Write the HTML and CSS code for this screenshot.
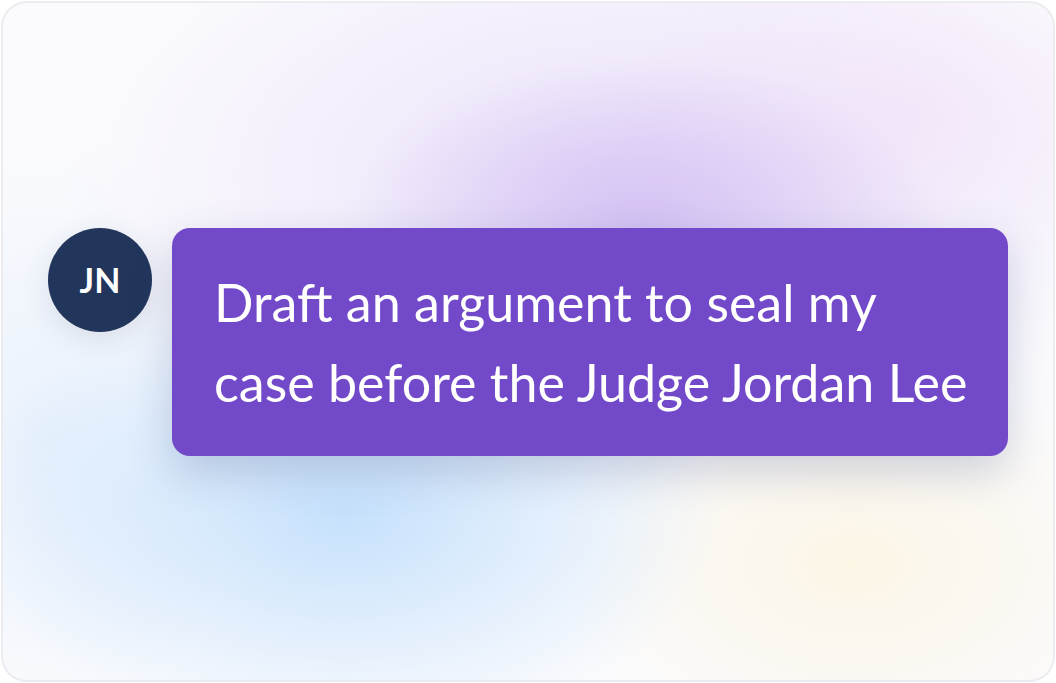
FILE: index.html
```html
<!DOCTYPE html>
<html lang="en">
<head>
<meta charset="utf-8">
<title>Chat</title>
<link rel="stylesheet" href="styles.css">
</head>
<body>
<div class="card">
  <div class="row">
    <div class="avatar">JN</div>
    <div class="bubble">Draft an argument to seal my<br>case before the Judge Jordan Lee</div>
  </div>
</div>
</body>
</html>
```

FILE: styles.css
```css
html, body {
  margin: 0;
  padding: 0;
  background: #ffffff;
}
body {
  width: 1056px;
  height: 683px;
  overflow: hidden;
}
.card {
  box-sizing: border-box;
  width: 1054px;
  height: 681px;
  margin: 1px;
  border: 2px solid #ececf0;
  border-radius: 26px;
  overflow: hidden;
  display: flex;
  flex-direction: column;
  justify-content: center;
  padding: 0 45px;
  background:
    radial-gradient(ellipse 300px 170px at 640px 225px, rgba(200, 178, 240, 0.7), rgba(200, 178, 240, 0) 100%),
    radial-gradient(ellipse 560px 300px at 620px 170px, rgba(226, 210, 248, 0.65), rgba(226, 210, 248, 0) 100%),
    radial-gradient(ellipse 300px 180px at 900px 110px, rgba(246, 230, 248, 0.6), rgba(246, 230, 248, 0) 100%),
    radial-gradient(ellipse 380px 230px at 340px 510px, rgba(188, 220, 252, 0.85), rgba(188, 220, 252, 0) 100%),
    radial-gradient(ellipse 300px 200px at 850px 560px, rgba(252, 243, 222, 0.75), rgba(252, 243, 222, 0) 100%),
    radial-gradient(ellipse 220px 300px at 40px 430px, rgba(226, 238, 252, 0.7), rgba(226, 238, 252, 0) 100%),
    #fbfbfd;
}
.row {
  display: flex;
  align-items: flex-start;
  gap: 20px;
}
.avatar {
  flex: 0 0 104px;
  width: 104px;
  height: 104px;
  border-radius: 50%;
  background: #22355a;
  color: #ffffff;
  font-family: Lato, "Noto Sans", sans-serif;
  font-weight: 700;
  font-size: 34px;
  display: flex;
  align-items: center;
  justify-content: center;
  box-shadow: 0 8px 30px rgba(40, 50, 90, 0.12);
}
.bubble {
  flex: 1;
  box-sizing: border-box;
  height: 228px;
  padding: 34px 40px 34px 42px;
  background: #7149c9;
  border-radius: 18px;
  color: #ffffff;
  font-family: Lato, "Noto Sans", sans-serif;
  font-size: 52px;
  line-height: 80px;
  box-shadow: 0 16px 44px rgba(60, 75, 130, 0.24);
}
```
